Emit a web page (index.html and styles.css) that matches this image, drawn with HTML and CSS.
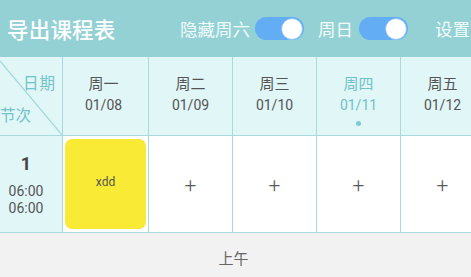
FILE: index.html
```html
<!DOCTYPE html>
<html lang="zh">
<head>
<meta charset="utf-8">
<link rel="stylesheet" href="styles.css">
</head>
<body>
<div class="app">
  <header class="topbar">
    <div class="title">导出课程表</div>
    <div class="actions">
      <span class="label">隐藏周六</span>
      <span class="toggle"><span class="knob"></span></span>
      <span class="label l2">周日</span>
      <span class="toggle"><span class="knob"></span></span>
      <span class="label l3">设置</span>
    </div>
  </header>
  <div class="table">
    <div class="row head">
      <div class="corner">
        <svg class="diag" width="62" height="78" viewBox="0 0 62 78"><line x1="0" y1="4" x2="62" y2="78" stroke="#a3d9db" stroke-width="1.2"/></svg>
        <span class="c-date">日期</span>
        <span class="c-sec">节次</span>
      </div>
      <div class="day first"><span class="wk">周一</span><span class="dt">01/08</span></div>
      <div class="day"><span class="wk">周二</span><span class="dt">01/09</span></div>
      <div class="day"><span class="wk">周三</span><span class="dt">01/10</span></div>
      <div class="day today"><span class="wk">周四</span><span class="dt">01/11</span><span class="dot"></span></div>
      <div class="day"><span class="wk">周五</span><span class="dt">01/12</span></div>
    </div>
    <div class="row body">
      <div class="sec">
        <span class="num">1</span>
        <span class="tm t1">06:00</span>
        <span class="tm">06:00</span>
      </div>
      <div class="cell first"><div class="course">xdd</div></div>
      <div class="cell"><span class="plus">+</span></div>
      <div class="cell"><span class="plus">+</span></div>
      <div class="cell"><span class="plus">+</span></div>
      <div class="cell"><span class="plus">+</span></div>
    </div>
  </div>
  <div class="period">上午</div>
</div>
</body>
</html>
```
FILE: styles.css
```css
* { box-sizing: border-box; }
html, body { margin: 0; padding: 0; }
body {
  width: 471px;
  height: 277px;
  overflow: hidden;
  font-family: Roboto, "Noto Sans CJK SC", sans-serif;
  background: #f2f2f2;
}
.app { width: 471px; height: 277px; overflow: hidden; }
.topbar {
  height: 57px;
  background: #94d1d4;
  display: flex;
  align-items: center;
  padding-left: 7px;
  color: #fff;
}
.title {
  font-family: "Noto Sans CJK SC", sans-serif;
  font-size: 21.5px;
  font-weight: 500;
  letter-spacing: 0.2px;
  line-height: 24px;
}
.actions {
  margin-left: auto;
  display: flex;
  align-items: center;
}
.label {
  font-family: "Noto Sans CJK SC", sans-serif;
  font-size: 17.5px;
  line-height: 22px;
  color: #f2fbfb;
  margin-right: 5px;
}
.l2 { margin-left: 14px; margin-right: 6px; }
.l3 { margin-left: 27px; margin-right: 1px; }
.toggle {
  width: 49px;
  height: 23px;
  border-radius: 12px;
  background: #63adf4;
  display: flex;
  align-items: center;
  justify-content: flex-end;
  padding-right: 1px;
}
.knob {
  width: 22px;
  height: 22px;
  border-radius: 50%;
  background: #fff;
  border: 1px solid #8cc3f6;
}
.table { width: 484px; }
.row { display: flex; }
.head {
  height: 79px;
  background: #e1f6f7;
  border-bottom: 1px solid #a8dadc;
}
.corner {
  position: relative;
  width: 62px;
  flex: none;
  display: flex;
  flex-direction: column;
  justify-content: space-between;
  padding: 15px 0 11px 0;
  font-family: "Noto Sans CJK SC", sans-serif;
  font-size: 15.5px;
  line-height: 20px;
  color: #72c4c7;
}
.diag { position: absolute; left: 0; top: 0; }
.c-date { align-self: flex-end; padding-right: 6px; letter-spacing: 1px; }
.c-sec { align-self: flex-start; padding-left: 0; letter-spacing: 0; }
.day {
  width: 84px;
  flex: none;
  border-left: 1px solid #a8dadc;
  display: flex;
  flex-direction: column;
  align-items: center;
  padding-top: 16px;
  color: #555;
}
.day.first { width: 86px; padding-right: 4px; }
.wk {
  font-family: "Noto Sans CJK SC", sans-serif;
  font-size: 15px;
  line-height: 20px;
}
.dt {
  font-size: 14px;
  line-height: 20px;
  margin-top: 2px;
}
.today { color: #6ec3c6; }
.dot {
  width: 5px;
  height: 5px;
  border-radius: 50%;
  background: #7fcbcd;
  margin-top: 6px;
}
.body {
  height: 97px;
  background: #fff;
  border-bottom: 1px solid #a8dadc;
}
.sec {
  width: 62px;
  flex: none;
  background: #e1f6f7;
  display: flex;
  flex-direction: column;
  align-items: center;
  padding: 18px 10px 0 0;
  color: #444;
}
.num { font-size: 18px; font-weight: 700; line-height: 20px; }
.tm { font-size: 14px; line-height: 17px; color: #555; }
.t1 { margin-top: 9px; }
.cell {
  width: 84px;
  flex: none;
  border-left: 1px solid #a8dadc;
  display: flex;
  align-items: center;
  justify-content: center;
}
.cell.first { width: 86px; display: block; padding: 3px 1px 0 2px; }
.course {
  width: 81px;
  height: 90px;
  background: #f8ea35;
  border-radius: 7px;
  display: flex;
  align-items: center;
  justify-content: center;
  font-size: 12px;
  color: #555;
  padding-bottom: 4px;
}
.plus {
  font-size: 21px;
  font-weight: 300;
  line-height: 22px;
  color: #5a5a5a;
  margin-top: 2px;
}
.period {
  height: 44px;
  display: flex;
  align-items: center;
  justify-content: center;
  padding-top: 5px;
  padding-right: 4px;
  font-family: "Noto Sans CJK SC", sans-serif;
  font-size: 15px;
  color: #666;
}
```
